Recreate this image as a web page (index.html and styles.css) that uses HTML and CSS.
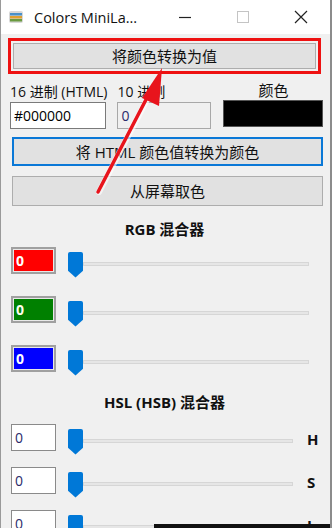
FILE: index.html
```html
<!DOCTYPE html>
<html lang="zh-CN">
<head>
  <meta charset="UTF-8" />
  <title>Colors MiniLab</title>
  <meta name="viewport" content="width=device-width, initial-scale=1.0" />
  <link rel="stylesheet" href="styles.css">
</head>
<body>
  <div class="window">
    <div class="titlebar">
      <span class="app-icon">
        <svg width="16" height="16" viewBox="0 0 16 16">
          <rect x="1" y="2" width="14" height="12" rx="2" fill="#d8d8d8"/>
          <rect x="2" y="4" width="12" height="2.5" fill="#4a90c8"/>
          <rect x="2" y="7" width="12" height="2.5" fill="#e0a030"/>
          <rect x="2" y="10" width="12" height="2.5" fill="#6a9a40"/>
        </svg>
      </span>
      <span class="title">Colors MiniLa...</span>
      <div class="win-controls">
        <span class="ctl"><svg width="14" height="14" viewBox="0 0 14 14"><path d="M1 7.5h12" stroke="#222" stroke-width="1.2"/></svg></span>
        <span class="ctl"><svg width="14" height="14" viewBox="0 0 14 14"><rect x="1.5" y="1.5" width="11" height="11" fill="none" stroke="#c4c4c4" stroke-width="1"/></svg></span>
        <span class="ctl"><svg width="14" height="14" viewBox="0 0 14 14"><path d="M1 1l12 12M13 1L1 13" stroke="#222" stroke-width="1.2"/></svg></span>
      </div>
    </div>

    <div class="content">
      <div class="highlight">
        <button class="btn">将颜色转换为值</button>
      </div>

      <div class="values">
        <div class="field">
          <label>16 进制 (HTML)</label>
          <input type="text" class="box" value="#000000" />
        </div>
        <div class="field">
          <label>10 进制</label>
          <input type="text" class="box box-dim" value="0" />
        </div>
        <div class="field field-swatch">
          <label>颜色</label>
          <div class="swatch"></div>
        </div>
      </div>

      <button class="btn btn-focus">将 HTML 颜色值转换为颜色</button>
      <button class="btn">从屏幕取色</button>

      <h3 class="mixer-title">RGB 混合器</h3>
      <div class="rgb-rows">
        <div class="mix-row">
          <div class="chan chan-red">0</div>
          <div class="slider"><span class="thumb"></span><span class="track"></span></div>
        </div>
        <div class="mix-row">
          <div class="chan chan-green">0</div>
          <div class="slider"><span class="thumb"></span><span class="track"></span></div>
        </div>
        <div class="mix-row">
          <div class="chan chan-blue">0</div>
          <div class="slider"><span class="thumb"></span><span class="track"></span></div>
        </div>
      </div>

      <h3 class="mixer-title hsl-title">HSL (HSB) 混合器</h3>
      <div class="hsl-rows">
        <div class="mix-row">
          <div class="chan">0</div>
          <div class="slider"><span class="thumb"></span><span class="track"></span></div>
          <span class="letter">H</span>
        </div>
        <div class="mix-row">
          <div class="chan">0</div>
          <div class="slider"><span class="thumb"></span><span class="track"></span></div>
          <span class="letter">S</span>
        </div>
        <div class="mix-row">
          <div class="chan">0</div>
          <div class="slider"><span class="thumb"></span><span class="track"></span></div>
          <span class="letter">L</span>
        </div>
      </div>
    </div>

    <!-- annotation arrow drawn over the window -->
    <svg class="arrow" width="332" height="528" viewBox="0 0 332 528">
      <line x1="99" y1="192" x2="152" y2="90" stroke="#fff" stroke-opacity="0.6" stroke-width="6" stroke-linecap="round"/>
      <line x1="98" y1="192" x2="151" y2="90" stroke="#e8141c" stroke-width="3.5" stroke-linecap="round"/>
      <polygon points="162,68 142,98 159,106" fill="#e8141c"/>
    </svg>
    <div class="taskbar"></div>
  </div>
</body>
</html>
```

FILE: styles.css
```css
html, body {
  margin: 0;
  padding: 0;
  background: #f0f0f0;
}

* {
  box-sizing: border-box;
}

body {
  font-family: "Open Sans", "Noto Sans CJK SC", sans-serif;
  color: #111;
}

.window {
  position: relative;
  width: 332px;
  height: 528px;
  overflow: hidden;
  background: #f0f0f0;
  border-left: 1px solid #9a9a9a;
  border-right: 2px solid #8c8c8c;
}

.titlebar {
  height: 34px;
  background: #fff;
  display: flex;
  align-items: center;
  padding-left: 7px;
}

.app-icon {
  display: flex;
  width: 16px;
  height: 16px;
}

.title {
  margin-left: 10px;
  font-size: 14.5px;
  color: #111;
}

.win-controls {
  margin-left: auto;
  display: flex;
}

.ctl {
  width: 58px;
  height: 34px;
  display: flex;
  align-items: center;
  justify-content: center;
}

.content {
  padding: 4px 9px 0 7px;
}

.highlight {
  border: 3px solid #ee1111;
  padding: 2px 2px;
}

.btn {
  display: block;
  width: 100%;
  height: 26px;
  background: #e1e1e1;
  border: 1px solid #adadad;
  font-family: "Open Sans", "Noto Sans CJK SC", sans-serif;
  font-size: 15px;
  color: #111;
  padding: 0;
  line-height: 22px;
}

.values {
  display: flex;
  margin-top: 8px;
  padding-left: 2px;
}

.field {
  display: flex;
  flex-direction: column;
}

.field label {
  font-size: 14px;
  height: 19px;
  line-height: 19px;
  color: #111;
  white-space: nowrap;
}

.field + .field {
  margin-left: 10px;
}

.box {
  width: 96px;
  height: 27px;
  border: 1px solid #7a7a7a;
  background: #fff;
  font-family: "Open Sans", sans-serif;
  font-size: 14px;
  padding: 0 3px;
  margin-top: 1px;
}

.box-dim {
  width: 94px;
  background: #f0f0f0;
  border-color: #a8a8a8;
  color: #2a2a6a;
}

.field-swatch {
  align-items: center;
  margin-left: 12px !important;
}

.field-swatch label {
  height: 17px;
  line-height: 17px;
  font-size: 15px;
}

.swatch {
  width: 100px;
  height: 27px;
  background: #000;
  border: 1px solid #555;
  margin-top: 1px;
}

.btn-focus {
  margin: 8px 0 0 4px;
  width: calc(100% - 2px);
  height: 29px;
  border: 2px solid #0a78d7;
}

.btn-focus + .btn {
  margin: 10px 0 0 4px;
  width: calc(100% - 2px);
  height: 30px;
}

.mixer-title {
  margin: 12px 0 0;
  text-align: center;
  font-size: 15px;
  font-weight: bold;
  height: 22px;
  line-height: 22px;
}

.rgb-rows {
  margin-top: 7px;
  display: flex;
  flex-direction: column;
  gap: 22px;
}

.hsl-title {
  margin-top: 19px;
}

.hsl-rows {
  margin-top: 11px;
  display: flex;
  flex-direction: column;
  gap: 16px;
}

.mix-row {
  display: flex;
  align-items: flex-start;
  height: 27px;
}

.chan {
  width: 45px;
  height: 27px;
  margin-left: 3px;
  border: 1px solid #8a8a8a;
  background: #fff;
  font-size: 14px;
  line-height: 25px;
  padding-left: 3px;
  color: #2a2a6a;
}

.chan-red, .chan-green, .chan-blue {
  border: 2px solid #a0a0a0;
  outline: 1px solid #e8e8e8;
  outline-offset: -3px;
  color: #fff;
  font-weight: bold;
  line-height: 23px;
}

.chan-red { background: #ff0000; }
.chan-green { background: #008000; color: #ffe; }
.chan-blue { background: #0000ff; }

.slider {
  flex: 1;
  display: flex;
  align-items: center;
  margin-left: 12px;
  margin-right: 12px;
  height: 27px;
  margin-top: 4px;
}

.thumb {
  width: 15px;
  height: 26px;
  background: #0078d7;
  clip-path: polygon(0 0, 100% 0, 100% 74%, 50% 100%, 0 74%);
  border-radius: 2px 2px 0 0;
  flex-shrink: 0;
}

.track {
  flex: 1;
  height: 4px;
  background: #e6e6e6;
  border: 1px solid #d6d6d6;
  margin-top: -2px;
}

.hsl-rows .slider {
  margin-right: 14px;
}

.letter {
  width: 14px;
  font-size: 15px;
  font-weight: bold;
  margin-top: 5px;
}

.arrow {
  position: absolute;
  left: -1px;
  top: 0;
  pointer-events: none;
}

.taskbar {
  position: absolute;
  left: 153px;
  right: 0;
  bottom: 0;
  height: 4px;
  background: #111;
}
```
